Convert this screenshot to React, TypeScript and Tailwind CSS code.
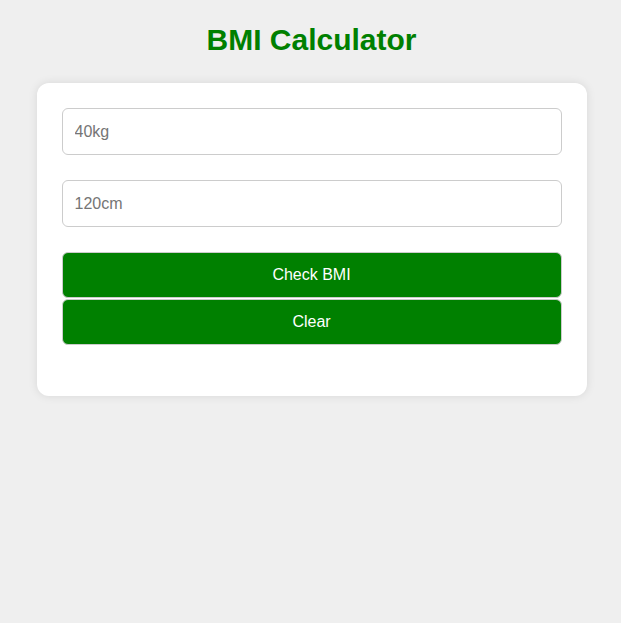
import React from "react";

export default function App() {
  return (
    <div className="min-h-[623px] bg-[#efefef] pt-[20px] pl-[2px]" style={{ fontFamily: '"Liberation Sans", Arial, sans-serif' }}>
      <h1 className="text-center text-[30px] font-bold leading-[40px] text-[#008000]">BMI Calculator</h1>
      <div className="mx-auto mt-[23px] w-[550px] rounded-[12px] bg-white px-[25px] pt-[25px] pb-[51px] shadow-[0_0_10px_rgba(0,0,0,0.1)]">
        <input
          placeholder="40kg"
          className="block h-[47px] w-full rounded-[6px] border border-[#ccc] px-[12px] text-[16px] text-black outline-none placeholder:text-[#757575]"
        />
        <input
          placeholder="120cm"
          className="mt-[25px] block h-[47px] w-full rounded-[6px] border border-[#ccc] px-[12px] text-[16px] text-black outline-none placeholder:text-[#757575]"
        />
        <button className="mt-[25px] block h-[46px] w-full rounded-[6px] border border-[#ccc] bg-[#008000] text-[16px] text-white">
          Check BMI
        </button>
        <button className="mt-[1px] block h-[46px] w-full rounded-[6px] border border-[#ccc] bg-[#008000] text-[16px] text-white">
          Clear
        </button>
      </div>
    </div>
  );
}
